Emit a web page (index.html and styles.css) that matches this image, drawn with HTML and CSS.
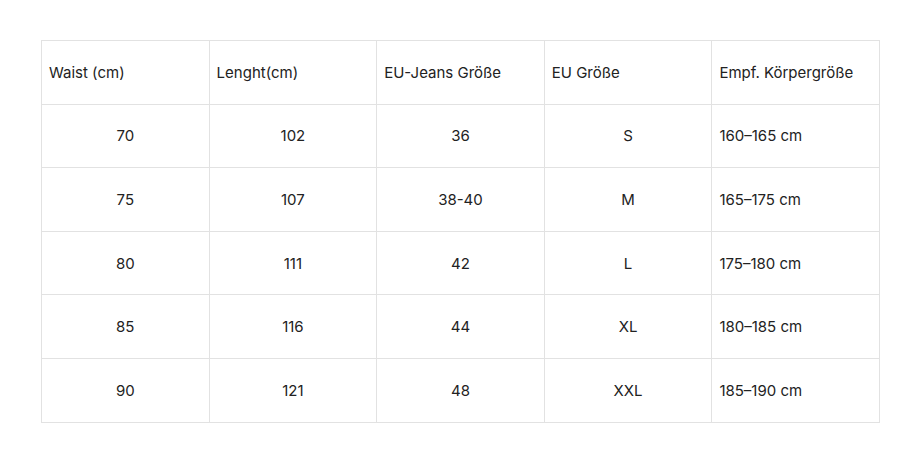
FILE: index.html
```html
<!DOCTYPE html>
<html lang="de">
<head>
<meta charset="utf-8">
<title>Size chart</title>
<link rel="stylesheet" href="styles.css">
</head>
<body>
<div class="wrap">
<table class="sizes">
  <thead>
    <tr>
      <th>Waist (cm)</th>
      <th>Lenght(cm)</th>
      <th>EU-Jeans Größe</th>
      <th>EU Größe</th>
      <th>Empf. Körpergröße</th>
    </tr>
  </thead>
  <tbody>
    <tr><td class="c">70</td><td class="c">102</td><td class="c">36</td><td class="c">S</td><td>160–165 cm</td></tr>
    <tr><td class="c">75</td><td class="c">107</td><td class="c">38-40</td><td class="c">M</td><td>165–175 cm</td></tr>
    <tr><td class="c">80</td><td class="c">111</td><td class="c">42</td><td class="c">L</td><td>175–180 cm</td></tr>
    <tr><td class="c">85</td><td class="c">116</td><td class="c">44</td><td class="c">XL</td><td>180–185 cm</td></tr>
    <tr><td class="c">90</td><td class="c">121</td><td class="c">48</td><td class="c">XXL</td><td>185–190 cm</td></tr>
  </tbody>
</table>
</div>
</body>
</html>
```
FILE: styles.css
```css
html, body {
  margin: 0;
  padding: 0;
  background: #ffffff;
}
.wrap {
  padding: 40px 0 0 41px;
}
.sizes {
  border-collapse: collapse;
  width: 839px;
  table-layout: fixed;
  font-family: Inter, "Open Sans", sans-serif;
  font-size: 15px;
  color: #222222;
}
.sizes th,
.sizes td {
  border: 1px solid #e2e2e2;
  height: 62.6px;
  padding: 0 7px;
  text-align: left;
  font-weight: 400;
  vertical-align: middle;
}
.sizes td.c {
  text-align: center;
}
```
